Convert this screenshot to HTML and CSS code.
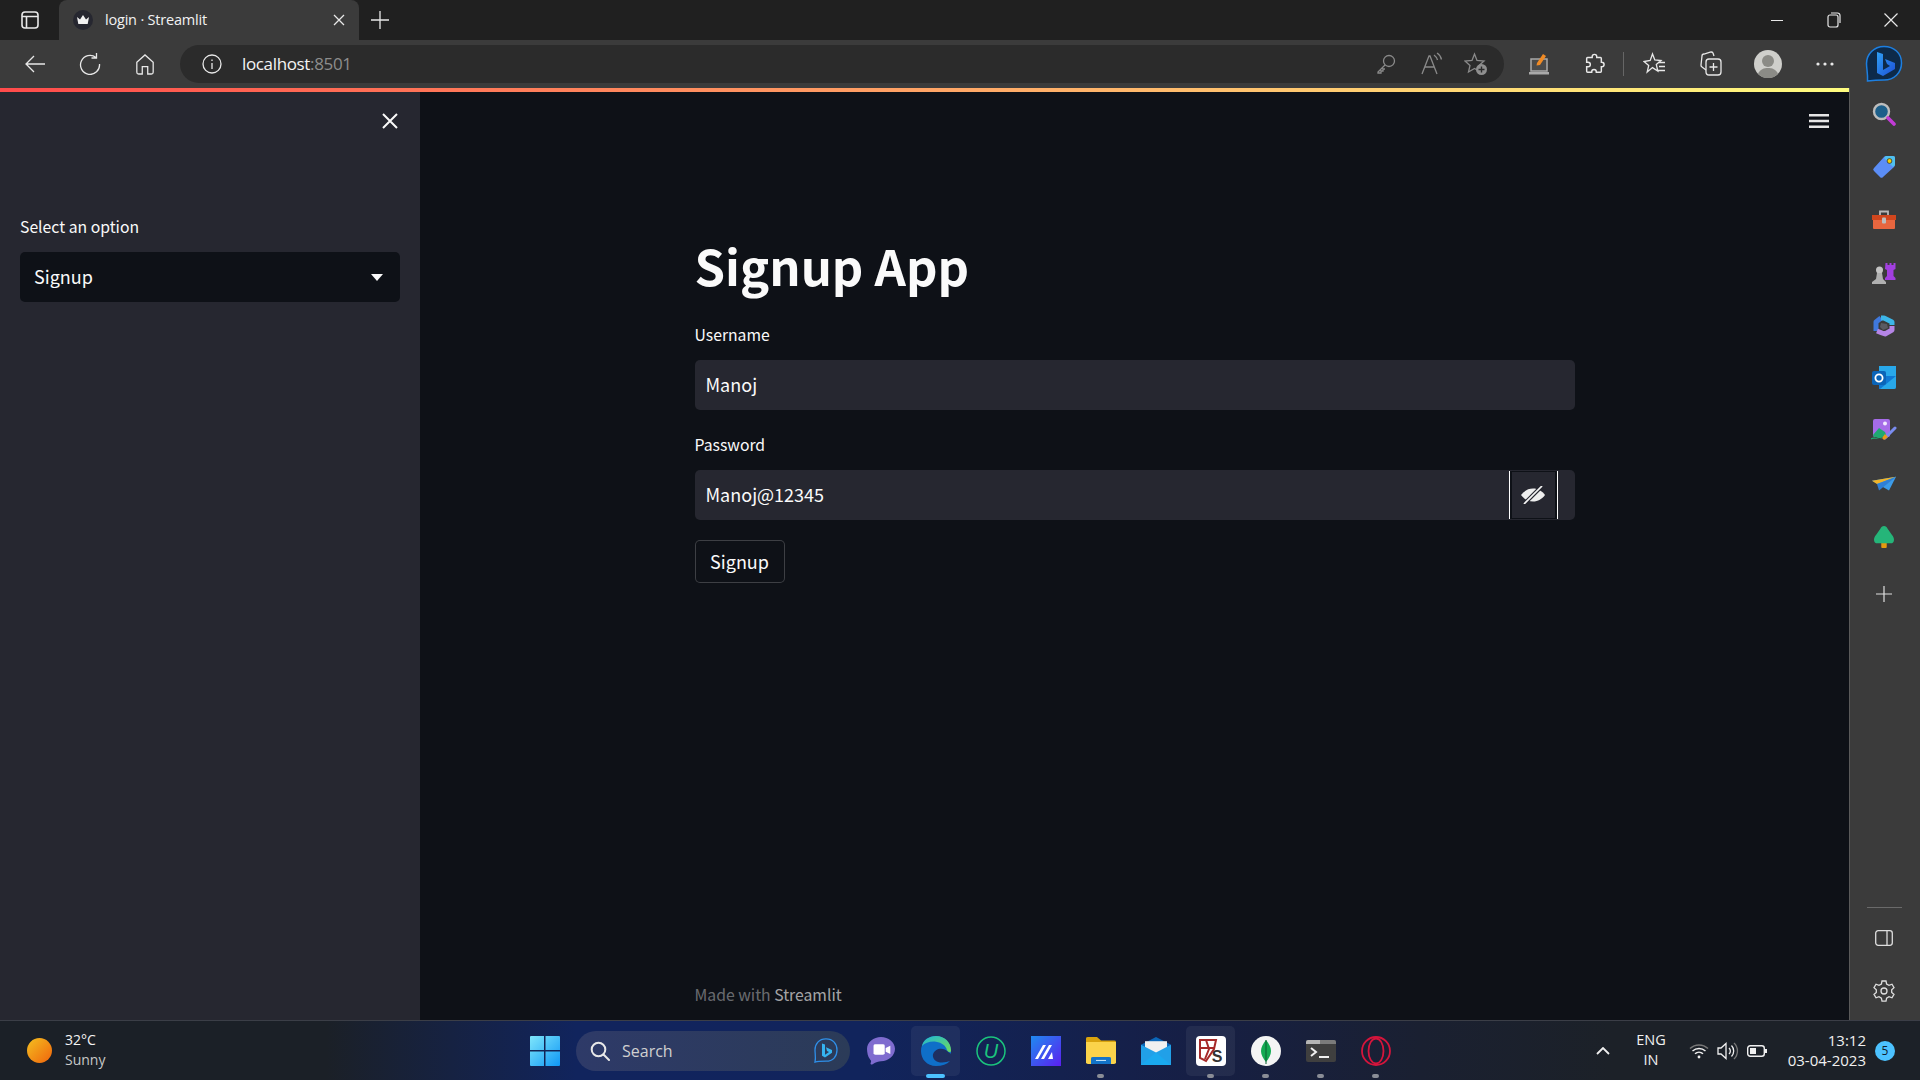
FILE: index.html
```html
<!DOCTYPE html>
<html lang="en">

<head>
    <meta charset="UTF-8">
    <meta name="viewport" content="width=device-width, initial-scale=1.0">
    <title>login · Streamlit</title>
    <link rel="stylesheet" href="styles.css">
</head>

<body>

    <!-- tab strip -->
    <div class="tabbar">
        <div class="tab-toggle">
            <svg width="20" height="20" viewBox="0 0 20 20" fill="none" stroke="#e8e8e8" stroke-width="1.6"><rect x="2" y="2" width="16" height="16" rx="3"/><path d="M2 6.5h16M6.5 6.5V18"/></svg>
        </div>
        <div class="tab">
            <svg class="favicon" width="20" height="20" viewBox="0 0 20 20"><circle cx="10" cy="10" r="10" fill="#262730"/><path d="M4 7l3 2.5L10 5l3 4.500L16 7l-1.300 7H5.300z" fill="#f2f2f2"/></svg>
            <span class="tab-title">login · Streamlit</span>
            <svg class="tab-close" width="12" height="12" viewBox="0 0 12 12" stroke="#e8e8e8" stroke-width="1.300"><path d="M1 1l10 10M11 1L1 11"/></svg>
        </div>
        <div class="tab-new">
            <svg width="18" height="18" viewBox="0 0 18 18" stroke="#e8e8e8" stroke-width="1.300"><path d="M9 0v18M0 9h18"/></svg>
        </div>
        <div class="win-controls">
            <div class="win-btn"><svg width="14" height="14" viewBox="0 0 14 14" stroke="#e8e8e8"><path d="M1 7.500h12"/></svg></div>
            <div class="win-btn"><svg width="14" height="16" viewBox="0 0 14 16" fill="none" stroke="#e8e8e8" stroke-width="1.200"><rect x="1" y="3" width="10" height="12" rx="2"/><path d="M4 1h6.500A2.500 2.500 0 0 1 13 3.500V11"/></svg></div>
            <div class="win-btn"><svg width="14" height="14" viewBox="0 0 14 14" stroke="#e8e8e8" stroke-width="1.200"><path d="M.5.500l13 13M13.500.500l-13 13"/></svg></div>
        </div>
    </div>

    <!-- toolbar -->
    <div class="toolbar">
        <div class="tool-btn"><svg width="22" height="22" viewBox="0 0 22 22" fill="none" stroke="#e8e8e8" stroke-width="1.300"><path d="M21 11H2M10 3l-8 8 8 8"/></svg></div>
        <div class="tool-btn"><svg width="22" height="22" viewBox="0 0 22 22" fill="none" stroke="#e8e8e8" stroke-width="1.300"><path d="M17 4.500A9.500 9.500 0 1 0 20.500 11M17.500 0v5h-5"/></svg></div>
        <div class="tool-btn"><svg width="20" height="22" viewBox="0 0 22 24" fill="none" stroke="#e8e8e8" stroke-width="1.400"><path d="M2 10l9-8 9 8v11a2 2 0 0 1-2 2h-4v-8H8v8H4a2 2 0 0 1-2-2z"/></svg></div>
        <div class="address">
            <svg class="info" width="20" height="20" viewBox="0 0 20 20" fill="none" stroke="#e8e8e8" stroke-width="1.300"><circle cx="10" cy="10" r="9"/><path d="M10 9v6M10 5.500v1.500"/></svg>
            <span class="url">localhost<span class="url-port">:8501</span></span>
            <div class="addr-actions">
                <svg class="addr-key" width="20" height="20" viewBox="0 0 20 20" fill="none" stroke="#8a8a8a" stroke-width="1.300"><circle cx="13" cy="7" r="5.500"/><path d="M9 11l-7 7v1h3v-2h2v-2h2"/></svg>
                <svg width="24" height="24" viewBox="0 0 24 24" fill="none" stroke="#8a8a8a" stroke-width="1.300"><path d="M3 22L10 4h1l7 18M6 15h9M15 3c2 1.500 3 3 3.500 5M18 1c2.500 1.500 4 4 4.500 6.500"/></svg>
                <svg width="24" height="24" viewBox="0 0 24 24"><path d="M10.500 2l2.500 6.500 7 .500-5 4.500 1.500 6.500-6-3.500-6 3.500 1.500-6.500-5-4.500 7-.500z" fill="none" stroke="#8a8a8a" stroke-width="1.300"/><circle cx="17.500" cy="17.500" r="5.500" fill="#8f8f8f"/><path d="M17.500 14.500v6M14.500 17.500h6" stroke="#2b2b2b" stroke-width="1.400"/></svg>
            </div>
        </div>
        <div class="tool-right">
            <div class="tool-cell"><svg width="20" height="22" viewBox="0 0 20 22"><path d="M2 6h16v12H2z" fill="#4a4a4a" stroke="#a9a9a9" stroke-width="1.500"/><path d="M0 19h20v2.500H0z" fill="#a9a9a9"/><path d="M8 10l6-9 3 2-6 9-3.500.500z" fill="#f08a24"/></svg></div>
            <div class="tool-cell tool-ext"><svg width="22" height="22" viewBox="0 0 22 24" fill="none" stroke="#e8e8e8" stroke-width="1.600"><path d="M9 4a2.500 2.500 0 0 1 5 0v1h4a1 1 0 0 1 1 1v4h.5a2.500 2.500 0 0 1 0 5H19v5a1 1 0 0 1-1 1h-4.500v-.5a2.500 2.500 0 0 0-5 0v.5H4a1 1 0 0 1-1-1v-5h1.500a2.500 2.500 0 0 0 0-5H3V6a1 1 0 0 1 1-1h5z"/></svg></div>
            <div class="tool-sep"></div>
            <div class="tool-cell"><svg width="24" height="24" viewBox="0 0 24 24" fill="none" stroke="#e8e8e8" stroke-width="1.300"><path d="M9.500 2l2.300 6 6.200.500-4.700 4 1.500 6.500-5.300-3.400L4.200 20l1.500-6.500-4.700-4L7.200 8.500zM15 10.500h7M16 14.500h6M15 18.500h7"/></svg></div>
            <div class="tool-cell"><svg width="24" height="26" viewBox="0 0 24 26" fill="none" stroke="#e8e8e8" stroke-width="1.300"><path d="M7 19L3 16a2 2 0 0 1-1-2l1-9a2 2 0 0 1 2-2l7-2a2 2 0 0 1 2 1l1 3"/><rect x="7" y="8" width="15" height="16" rx="3"/><path d="M14.500 12v8M10.500 16h8"/></svg></div>
            <div class="tool-cell tool-profile">
                <svg width="28" height="28" viewBox="0 0 28 28"><circle cx="14" cy="14" r="14" fill="#cfcfcb"/><circle cx="14" cy="11" r="6" fill="#8b8b86"/><path d="M4 24c2-5 6-6 10-6s8 1 10 6a14 14 0 0 1-20 0z" fill="#8b8b86"/></svg>
            </div>
            <div class="tool-cell"><svg width="18" height="4" viewBox="0 0 18 4" fill="#e8e8e8"><circle cx="2" cy="2" r="1.600"/><circle cx="9" cy="2" r="1.600"/><circle cx="16" cy="2" r="1.600"/></svg></div>
            <div class="tool-cell tool-bing">
                <svg width="38" height="38" viewBox="0 0 38 38">
                    <defs><linearGradient id="bingG" x1="0" y1="0" x2="1" y2="1"><stop offset="0" stop-color="#2fa0f5"/><stop offset="1" stop-color="#1d4fd8"/></linearGradient></defs>
                    <path d="M19 1.500C9 1.500 1.500 9 1.500 18.500c0 5.500 1.500 10 1 17.500 4-.500 8-1 16.500-1 10 0 17.500-7 17.500-17S29 1.500 19 1.500z" fill="#0d2a4a" stroke="#1d7fe0" stroke-width="1.500"/>
                    <path d="M12 7l6 2v16l7-4-3-2-2-5 10 4v6l-12 7-6-3z" fill="url(#bingG)"/>
                </svg>
            </div>
        </div>
    </div>

    <div class="viewport">
        <!-- streamlit app -->
        <div class="app">
            <div class="app-bar"></div>
            <div class="app-body">
                <aside class="sidebar">
                    <div class="side-head">
                        <svg width="16" height="16" viewBox="0 0 16 16" stroke="#fafafa" stroke-width="2"><path d="M1 1l14 14M15 1L1 15"/></svg>
                    </div>
                    <label class="label side-label">Select an option</label>
                    <div class="select">
                        <span>Signup</span>
                        <svg width="12" height="7" viewBox="0 0 12 7" fill="#fafafa"><path d="M0 0h12L6 7z"/></svg>
                    </div>
                </aside>
                <main class="main">
                    <div class="main-head">
                        <svg width="20" height="14" viewBox="0 0 20 14" fill="#e6e6e6"><path d="M0 0h20v2.400H0zM0 5.800h20v2.400H0zM0 11.600h20V14H0z"/></svg>
                    </div>
                    <div class="block">
                        <h1>Signup App</h1>
                        <label class="label">Username</label>
                        <div class="input"><span>Manoj</span></div>
                        <label class="label label-next">Password</label>
                        <div class="input input-pass">
                            <span>Manoj@12345</span>
                            <div class="eye">
                                <svg width="24" height="18" viewBox="0 0 24 18"><path d="M0 9c3-4 7-6.500 12-6.500S21 5 24 9c-3 4-7 6.500-12 6.500S3 13 0 9z" fill="#eeeeee"/><path d="M21 0L3 18" stroke="#262730" stroke-width="4"/><path d="M21 0L3 18" stroke="#f5f5f5" stroke-width="1.700"/></svg>
                            </div>
                        </div>
                        <button class="btn">Signup</button>
                    </div>
                    <div class="block footer">Made with <span class="footer-link">Streamlit</span></div>
                </main>
            </div>
        </div>

        <!-- edge side panel -->
        <div class="edge-side">
            <div class="side-icon"><svg width="24" height="24" viewBox="0 0 24 24"><circle cx="9.500" cy="9.500" r="7.500" fill="#1d5f8a" stroke="#bdbdbd" stroke-width="2.400"/><path d="M16 16l6 6" stroke="#c23bd6" stroke-width="3.600" stroke-linecap="round"/></svg></div>
            <div class="side-icon"><svg width="24" height="24" viewBox="0 0 24 24"><path d="M14 1h7a2 2 0 0 1 2 2v7a3 3 0 0 1-1 2L11 22a2 2 0 0 1-3 0l-6-6a2 2 0 0 1 0-3L12 2a3 3 0 0 1 2-1z" fill="#5b8df6"/><path d="M14 1h7a2 2 0 0 1 2 2v7l-2 2-9-9z" fill="#4fc0ee"/><circle cx="17.500" cy="6" r="2.400" fill="#f5d000" stroke="#333" stroke-width=".8"/></svg></div>
            <div class="side-icon"><svg width="24" height="24" viewBox="0 0 24 24"><path d="M8 7V3.500h8V7" fill="none" stroke="#b8b8b8" stroke-width="1.800"/><path d="M0 7h24v5H0z" fill="#d1461d"/><path d="M1 12h22v8a1 1 0 0 1-1 1H2a1 1 0 0 1-1-1z" fill="#e8663f"/><rect x="10" y="9.500" width="4" height="6" rx="1" fill="#bdbdbd"/></svg></div>
            <div class="side-icon"><svg width="24" height="24" viewBox="0 0 24 24"><path d="M13.500 2h2v2h2V2h2v2h2V2h2v6l-2 1v6l2 2v2H13v-2l2-2V9l-2-1z" fill="#a23fe0"/><circle cx="7.500" cy="9" r="3.500" fill="#c4c4c4"/><path d="M5 12h5l1 6 3 3v2H0v-2l4-3z" fill="#b0b0b0"/></svg></div>
            <div class="side-icon"><svg width="22" height="22" viewBox="0 0 22 22" fill="none" stroke-width="5" stroke-linejoin="round"><path d="M3 16V7l5-4" stroke="#3f78dc"/><path d="M8 3h3l8 4v3" stroke="#3cb6e8"/><path d="M19 11v4l-7 4-3-1-5-2" stroke="#b585e6"/><path d="M8 8l6 1 1 4-5 2-3-3z" fill="#5a5a62" stroke="none"/></svg></div>
            <div class="side-icon"><svg width="24" height="24" viewBox="0 0 24 24"><path d="M7 0h17v11H7z" fill="#28a8ea"/><path d="M7 10h17v11a2 2 0 0 1-2 2H7z" fill="#0f78d4"/><path d="M8 23l16-13v11a2 2 0 0 1-2 2z" fill="#28a8ea"/><rect y="5" width="14" height="14" rx="2" fill="#0a64b8"/><circle cx="7" cy="12" r="3.600" fill="none" stroke="#fff" stroke-width="1.800"/></svg></div>
            <div class="side-icon"><svg width="26" height="26" viewBox="0 0 26 26"><rect x="2" y="1" width="17" height="18" rx="2" fill="#a66ce8"/><circle cx="14" cy="5.500" r="2" fill="#f2e9ff"/><path d="M2 17l6-7 6 4 2 5H4a2 2 0 0 1-2-2z" fill="#1fa971"/><path d="M14 20l10-10" stroke="#7a8cf0" stroke-width="3" stroke-linecap="round"/><path d="M11 20l3-4 3 3-4 3z" fill="#e89a1c"/><path d="M0 21c3-2 4 0 6-1s3-1 5 0" fill="none" stroke="#1fa971" stroke-width="1.200"/></svg></div>
            <div class="side-icon"><svg width="24" height="16" viewBox="0 0 24 20" preserveAspectRatio="none"><path d="M0 6l24-5-7 17z" fill="#3c9be8"/><path d="M0 6l24-5L5 10z" fill="#f0b429"/><path d="M5 10L24 1 7 18z" fill="#2f7fd6"/></svg></div>
            <div class="side-icon"><svg width="20" height="22" viewBox="0 0 22 24"><path d="M8 18h6v5a1 1 0 0 1-1 1H9a1 1 0 0 1-1-1z" fill="#e49a10"/><path d="M11 0c2 0 3 1 4 3l5 7c1 1 2 3 2 5a4 4 0 0 1-4 4H4a4 4 0 0 1-4-4c0-2 1-4 2-5l5-7c1-2 2-3 4-3z" fill="#25b579"/></svg></div>
            <div class="side-icon side-plus"><svg width="16" height="16" viewBox="0 0 16 16" stroke="#e0e0e0" stroke-width="1.200"><path d="M8 0v16M0 8h16"/></svg></div>
            <div class="side-spacer"></div>
            <div class="side-rule"></div>
            <div class="side-icon"><svg width="18" height="16" viewBox="0 0 18 16" fill="none" stroke="#dedede" stroke-width="1.300"><rect x=".7" y=".7" width="16.600" height="14.600" rx="2.500"/><path d="M12 .7v14.600"/></svg></div>
            <div class="side-icon side-gear"><svg width="22" height="22" viewBox="0 0 22 22" fill="none" stroke="#dedede" stroke-width="1.300"><circle cx="11" cy="11" r="3"/><path d="M9 1h4l.6 3 2.400 1.300L19 4.200l2 3.500-2.300 2 0 2.700 2.300 2-2 3.400-3-1.100-2.400 1.400-.6 3H9l-.6-3L6 16.700 3 17.800l-2-3.400 2.300-2v-2.700L1 7.700l2-3.500 3 1.100L8.400 4z"/></svg></div>
        </div>
    </div>

    <!-- windows taskbar -->
    <footer class="taskbar">
        <div class="weather">
            <div class="sun"></div>
            <div class="weather-text">
                <div class="temp">32°C</div>
                <div class="sky">Sunny</div>
            </div>
        </div>
        <svg class="winlogo" width="30" height="30" viewBox="0 0 30 30"><defs><linearGradient id="winG" x1="0" y1="0" x2="1" y2="1"><stop offset="0" stop-color="#7fe6fb"/><stop offset="1" stop-color="#0f97f5"/></linearGradient></defs><path d="M0 1a1 1 0 0 1 1-1h13v14H0zM15.500 0H29a1 1 0 0 1 1 1v13H15.500zM0 15.500h14V30H1a1 1 0 0 1-1-1zM15.500 15.500H30V29a1 1 0 0 1-1 1H15.500z" fill="url(#winG)"/></svg>
        <div class="search">
            <svg width="20" height="20" viewBox="0 0 20 20" fill="none" stroke="#e8e8e8" stroke-width="2"><circle cx="8.500" cy="8.500" r="6.800"/><path d="M13.500 13.500L19 19" stroke-linecap="round"/></svg>
            <span>Search</span>
            <svg class="search-bing" width="24" height="26" viewBox="0 0 24 28" preserveAspectRatio="none"><path d="M12 1C5 1 1 6 1 13c0 4 1 8 0 13 3-1 6-1 11-1 7 0 11-5 11-12S19 1 12 1z" fill="none" stroke="#2f8fe8" stroke-width="1.300"/><path d="M8 6l3 1v11l4-3-2-1-1-4 6 3v3l-7 5-3-2z" fill="#35b4f0"/></svg>
        </div>
        <div class="apps">
            <div class="app-icon"><svg width="28" height="28" viewBox="0 0 30 38" preserveAspectRatio="none"><path d="M15 0c8 0 15 7 15 16s-7 17-15 17c-3 0-5 1-9 4-1 1-3 0-2-2 1-3 0-3-1-5C1 27 0 21 0 16 0 7 7 0 15 0z" fill="#7f6ccf"/><rect x="7" y="10" width="12" height="14" rx="2" fill="#fff"/><path d="M20 15l5-3v11l-5-3z" fill="#fff"/></svg></div>
            <div class="app-icon app-active">
                <svg width="30" height="30" viewBox="0 0 30 36" preserveAspectRatio="none"><defs><linearGradient id="edgeG" x1="0" y1="0" x2="1" y2="1"><stop offset="0" stop-color="#1fb6d8"/><stop offset="1" stop-color="#6fdc5a"/></linearGradient></defs><path d="M15 0C6 0 0 8 0 18c0 10 6 18 15 18 6 0 11-2 14-6-4 2-12 3-15-1-3-3-3-9 1-12 4-3 9-2 12 2 2 2 2 2 3 2 1-10-5-21-15-21z" fill="#0f6fc8"/><path d="M15 0c-7 0-13 5-14 12 3-4 9-6 14-5 6 1 10 5 11 10 2 3 4 3 4 0 0-9-6-17-15-17z" fill="url(#edgeG)"/></svg>
            </div>
            <div class="app-icon"><svg width="30" height="30" viewBox="0 0 30 30"><circle cx="15" cy="15" r="14" fill="none" stroke="#1bc47d" stroke-width="1.500"/><text x="15" y="22" text-anchor="middle" class="u-glyph">U</text></svg></div>
            <div class="app-icon"><svg width="30" height="30" viewBox="0 0 30 30"><defs><linearGradient id="mG" x1="0" y1="0" x2="1" y2="1"><stop offset="0" stop-color="#1f8bf0"/><stop offset="1" stop-color="#5b1ff0"/></linearGradient></defs><rect width="30" height="30" fill="url(#mG)"/><path d="M4 23L12 9h3L7 23zM10 23l8-14h3l-8 14zM17 23l4-7 1 7z" fill="#fff"/></svg></div>
            <div class="app-icon"><svg width="30" height="27" viewBox="0 0 30 38" preserveAspectRatio="none"><path d="M0 2a2 2 0 0 1 2-2h9l4 5h13a2 2 0 0 1 2 2v5H0z" fill="#d9a30e"/><path d="M0 7h30v29a2 2 0 0 1-2 2H2a2 2 0 0 1-2-2z" fill="#fbd34b"/><path d="M5 38v-8a2 2 0 0 1 2-2h16a2 2 0 0 1 2 2v8z" fill="#1373c8"/><path d="M10 33h10" stroke="#bfe0f7" stroke-width="1.500"/></svg></div>
            <div class="app-icon"><svg width="30" height="28" viewBox="0 0 30 40" preserveAspectRatio="none"><path d="M15 0L30 11v5H0v-5z" fill="#0b66b8"/><path d="M4 6h22v20H4z" fill="#f0f0f0"/><path d="M0 11l15 11 15-11v29H0z" fill="#21a0e8"/><path d="M0 40l15-18 15 18z" fill="#1aa9ef"/></svg></div>
            <div class="app-icon app-tile">
                <svg width="30" height="30" viewBox="0 0 30 30"><rect width="30" height="30" rx="4" fill="#fff"/><path d="M4 4h16l-2 9-8 12-6-3zM4 12h14M10 4l3 9-4 10" fill="none" stroke="#a62a2a" stroke-width="2"/><text x="21" y="26" text-anchor="middle" class="s-glyph">S</text></svg>
            </div>
            <div class="app-icon"><svg width="30" height="30" viewBox="0 0 30 30"><circle cx="15" cy="15" r="15" fill="#f4f4f4"/><path d="M15 4c3 4 5 7 5 11s-2 7-5 11c-3-4-5-7-5-11s2-7 5-11z" fill="#13aa52"/><path d="M15 4v24" stroke="#0a5c2e" stroke-width="1"/></svg></div>
            <div class="app-icon"><svg width="30" height="22" viewBox="0 0 30 22"><rect width="30" height="22" rx="2" fill="#3f3f3f"/><path d="M0 2a2 2 0 0 1 2-2h12v4H0z" fill="#b5b5b5"/><path d="M14 0h14a2 2 0 0 1 2 2v2H14z" fill="#7b7b7b"/><path d="M5 8l5 4-5 4" fill="none" stroke="#f0f0f0" stroke-width="2"/><path d="M13 17h10" stroke="#f0f0f0" stroke-width="2"/></svg></div>
            <div class="app-icon"><svg width="30" height="30" viewBox="0 0 30 30" fill="none" stroke="#d5153c" stroke-width="1.800"><circle cx="15" cy="15" r="14"/><ellipse cx="15" cy="15" rx="7.500" ry="12.500"/></svg></div>
        </div>
        <div class="tray">
            <div class="tray-cell tray-chev"><svg width="14" height="8" viewBox="0 0 14 8" fill="none" stroke="#f0f0f0" stroke-width="1.800"><path d="M1 7l6-6 6 6"/></svg></div>
            <div class="tray-lang"><div>ENG</div><div>IN</div></div>
            <div class="tray-cell"><svg width="20" height="16" viewBox="0 0 20 16" fill="none" stroke-width="1.500"><path d="M1 5.500a13 13 0 0 1 18 0" stroke="#777"/><path d="M3.500 8a10 10 0 0 1 13 0M6 10.800a6 6 0 0 1 8 0" stroke="#f0f0f0"/><circle cx="10" cy="14" r="1.400" fill="#f0f0f0" stroke="none"/></svg></div>
            <div class="tray-cell"><svg width="22" height="18" viewBox="0 0 22 18" fill="none" stroke-width="1.300"><path d="M1 6h3l5-4.500v15L4 12H1z" stroke="#f0f0f0"/><path d="M12 6a4 4 0 0 1 0 6M14.500 3.500a8 8 0 0 1 0 11" stroke="#f0f0f0"/><path d="M17 1a11 11 0 0 1 0 16" stroke="#777"/></svg></div>
            <div class="tray-cell"><svg width="20" height="12" viewBox="0 0 20 12"><rect x=".7" y=".7" width="16.600" height="10.600" rx="2.500" fill="none" stroke="#f0f0f0" stroke-width="1.400"/><rect x="3" y="3" width="6" height="6" fill="#f0f0f0"/><rect x="18" y="4" width="2" height="4" fill="#f0f0f0"/></svg></div>
            <div class="clock"><div>13:12</div><div>03-04-2023</div></div>
            <div class="badge">5</div>
        </div>
    </footer>

</body>

</html>
```

FILE: styles.css
```css
* {
    box-sizing: border-box;
}

html,
body {
    margin: 0;
    height: 100%;
    overflow: hidden;
}

body {
    width: 1920px;
    height: 1080px;
    display: flex;
    flex-direction: column;
    font-family: "Open Sans", "Noto Sans", sans-serif;
    color: #f0f0f0;
    background: #3b3b3b;
}

svg {
    display: block;
    flex-shrink: 0;
}

/* tab strip */
.tabbar {
    height: 40px;
    display: flex;
    background: #202020;
}

.tab-toggle {
    width: 59px;
    display: flex;
    align-items: center;
    justify-content: center;
}

.tab {
    width: 300px;
    display: flex;
    align-items: center;
    padding: 0 14px 0 14px;
    background: #3b3b3b;
    border-radius: 8px 8px 0 0;
}

.tab-title {
    margin: -2px 0 0 12px;
    flex: 1;
    font-size: 14.5px;
    letter-spacing: -0.2px;
    color: #f2f2f2;
}

.tab-new {
    width: 42px;
    display: flex;
    align-items: center;
    justify-content: center;
}

.win-controls {
    margin-left: auto;
    padding-right: 1px;
    display: flex;
}

.win-btn {
    width: 57px;
    display: flex;
    align-items: center;
    justify-content: center;
}

/* toolbar */
.toolbar {
    height: 48px;
    display: flex;
    align-items: center;
    padding-left: 7px;
    background: #3b3b3b;
}

.tool-btn {
    width: 55px;
    display: flex;
    align-items: center;
    justify-content: center;
}

.address {
    flex: 1;
    height: 38px;
    margin-left: 8px;
    display: flex;
    align-items: center;
    padding: 0 16px 0 22px;
    background: #2b2b2b;
    border-radius: 19px;
}

.url {
    margin: -2px 0 0 20px;
    font-size: 17px;
    letter-spacing: -0.35px;
    color: #f4f4f4;
}

.url-port {
    color: #8d8d8d;
}

.addr-actions {
    margin-left: auto;
    display: flex;
    align-items: center;
    gap: 21px;
}

.addr-key {
    margin-right: 2px;
}

.tool-right {
    width: 409px;
    margin-left: 7px;
    display: flex;
    align-items: center;
}

.tool-cell {
    width: 56px;
    display: flex;
    align-items: center;
    justify-content: center;
}

.tool-ext {
    padding-right: 2px;
}

.tool-profile {
    width: 58px;
}

.tool-bing {
    width: 67px;
    padding-right: 5px;
}

.tool-sep {
    width: 1px;
    height: 24px;
    margin: 0 3px 0 0;
    background: #666;
}

/* main area */
.viewport {
    flex: 1;
    display: flex;
    min-height: 0;
}

.app {
    flex: 1;
    display: flex;
    flex-direction: column;
    min-width: 0;
}

.app-bar {
    height: 4px;
    background: linear-gradient(90deg, #ff4b4b, #fffd80);
}

.app-body {
    flex: 1;
    display: flex;
    font-family: "Noto Sans CJK SC", "Noto Sans", sans-serif;
    color: #fafafa;
    background: #0e1117;
}

.sidebar {
    width: 420px;
    padding: 0 20px;
    background: #262730;
}

.side-head {
    height: 58px;
    display: flex;
    align-items: center;
    justify-content: flex-end;
    padding-right: 2px;
}

.label {
    display: block;
    font-size: 15.75px;
    line-height: 25px;
    color: #fafafa;
}

.side-label {
    margin-top: 64px;
    margin-bottom: 13px;
}

.select {
    height: 50px;
    display: flex;
    align-items: center;
    justify-content: space-between;
    padding: 0 17px 0 14px;
    font-size: 18px;
    background: #0e1117;
    border-radius: 5px;
}

.select span,
.input span {
    margin-top: -2px;
}

.main {
    flex: 1;
    display: flex;
    flex-direction: column;
    align-items: center;
}

.main-head {
    width: 100%;
    height: 58px;
    display: flex;
    align-items: center;
    justify-content: flex-end;
    padding-right: 20px;
}

.block {
    width: 880px;
}

h1 {
    margin: 72px 0 0;
    height: 100px;
    font-size: 49px;
    font-weight: 700;
    line-height: 86px;
    color: #fafafa;
}

.label-next {
    margin-top: 22px;
}

.input {
    height: 50px;
    margin-top: 13px;
    display: flex;
    align-items: center;
    justify-content: space-between;
    padding-left: 11px;
    font-size: 18px;
    background: #262730;
    border-radius: 5px;
}

.input-pass {
    padding-right: 17px;
}

.eye {
    width: 49px;
    height: 48px;
    display: flex;
    align-items: center;
    justify-content: center;
    border-left: 1px solid #fff;
    border-right: 1px solid #fff;
    box-shadow: inset 2px 0 0 #0e1117, inset -2px 0 0 #0e1117, inset 0 1px 0 #0e1117, inset 0 -1px 0 #0e1117;
}

.btn {
    display: block;
    width: 90px;
    height: 43px;
    margin-top: 20px;
    padding: 0 0 2px;
    font-family: inherit;
    font-size: 18px;
    color: #fafafa;
    background: #0e1117;
    border: 1px solid rgba(250, 250, 250, 0.2);
    border-radius: 5px;
}

.footer {
    margin-top: auto;
    height: 38px;
    font-size: 15.75px;
    line-height: 25px;
    color: rgba(250, 250, 250, 0.4);
}

.footer-link {
    color: rgba(250, 250, 250, 0.65);
}

/* edge side panel */
.edge-side {
    width: 71px;
    display: flex;
    flex-direction: column;
    align-items: center;
    padding-right: 2px;
    background: #3b3b3b;
    border-left: 1px solid #5a5a5a;
}

.side-icon {
    height: 52.8px;
    flex-shrink: 0;
    display: flex;
    align-items: center;
    justify-content: center;
}

.side-plus {
    margin-top: 4px;
}

.side-spacer {
    flex: 1;
}

.side-rule {
    width: 35px;
    height: 1px;
    background: #6a6a6a;
    margin-bottom: 3px;
}

.side-gear {
    margin-bottom: 3px;
}

/* taskbar */
.taskbar {
    height: 60px;
    display: flex;
    align-items: center;
    background: linear-gradient(90deg, #1b2027 0%, #1b2027 17%, #11245d 30%, #11245c 45%, #161f45 62%, #1a2031 74%, #1c2128 84%);
    border-top: 1px solid #3b3e47;
    font-size: 14px;
}

.weather {
    width: 530px;
    display: flex;
    align-items: center;
    padding-left: 27px;
}

.sun {
    width: 25px;
    height: 25px;
    border-radius: 50%;
    background: linear-gradient(135deg, #f4c020, #f0640c);
}

.weather-text {
    margin: -2px 0 0 13px;
    line-height: 20px;
}

.temp {
    color: #f4f4f4;
}

.sky {
    color: #c8c8c8;
}

.search {
    width: 274px;
    height: 40px;
    margin-left: 16px;
    display: flex;
    align-items: center;
    padding: 0 12px 0 14px;
    font-size: 16px;
    color: #d0d0d0;
    background: linear-gradient(90deg, #2e3a68, #2b3b58);
    border-radius: 20px;
}

.search span {
    margin-left: 12px;
}

.search-bing {
    margin-left: auto;
}

.apps {
    display: flex;
    margin-left: 3px;
}

.app-icon {
    position: relative;
    width: 55px;
    height: 50px;
    display: flex;
    align-items: center;
    justify-content: center;
}

.app-icon svg {
    position: relative;
}

.app-active::before,
.app-tile::before {
    content: "";
    position: absolute;
    left: 3px;
    right: 3px;
    top: 0;
    bottom: 0;
    border-radius: 5px;
    background: rgba(255, 255, 255, 0.06);
}

.app-active::after,
.app-icon:nth-child(n+5)::after {
    content: "";
    position: absolute;
    left: 24px;
    bottom: -2px;
    width: 7px;
    height: 4px;
    border-radius: 2px;
    background: #8a8d96;
}

.app-active::after {
    left: 18px;
    width: 19px;
    background: #4cc2ff;
}

.app-icon:nth-child(6)::after {
    display: none;
}

.u-glyph {
    font-family: "Liberation Sans", sans-serif;
    font-size: 20px;
    font-style: italic;
    fill: #1bc47d;
}

.s-glyph {
    font-family: "Liberation Sans", sans-serif;
    font-size: 16px;
    font-weight: 700;
    fill: #333;
}

.tray {
    margin-left: auto;
    display: flex;
    align-items: center;
    padding-right: 25px;
}

.tray-cell {
    width: 29px;
    display: flex;
    align-items: center;
    justify-content: center;
}

.tray-chev {
    width: 30px;
}

.tray-lang {
    width: 66px;
    margin-top: -2px;
    text-align: center;
    font-size: 14.5px;
    line-height: 20px;
}

.clock {
    width: 95px;
    margin-top: -2px;
    text-align: right;
    font-size: 15px;
    line-height: 20px;
}

.badge {
    width: 20px;
    height: 20px;
    margin-left: 9px;
    border-radius: 50%;
    font-size: 12px;
    line-height: 20px;
    text-align: center;
    color: #10202c;
    background: #4cc2ff;
}
```
